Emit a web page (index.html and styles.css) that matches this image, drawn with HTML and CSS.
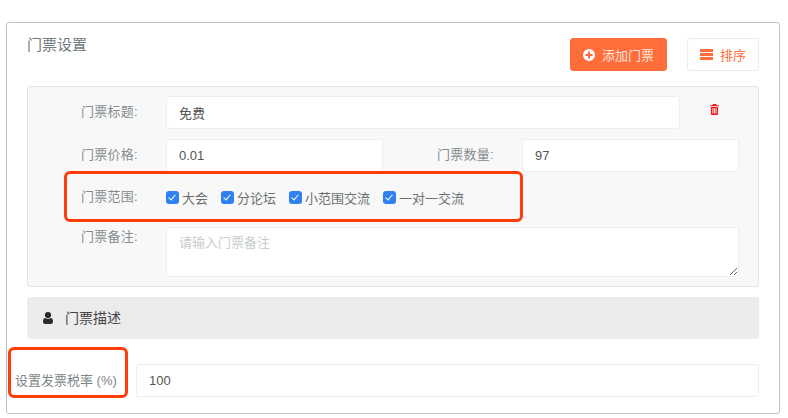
FILE: index.html
```html
<!DOCTYPE html>
<html lang="zh-CN">
<head>
  <meta charset="UTF-8">
  <title>门票设置</title>
  <link rel="stylesheet" href="styles.css">
</head>
<body>
  <div class="card">
    <div class="card-head">
      <div class="card-title">门票设置</div>
      <div class="head-actions">
        <button class="btn btn-add">
          <svg class="icon" width="12" height="12" viewBox="0 0 12 12"><path fill="#fff" d="M6 0a6 6 0 1 0 0 12A6 6 0 0 0 6 0zM9.500 7H7v2.500H5V7H2.500V5H5V2.500h2V5h2.500z"/></svg>
          添加门票
        </button>
        <button class="btn btn-sort">
          <svg class="icon" width="13" height="11" viewBox="0 0 13 11"><path fill="#ff6d3a" d="M0 0h13v3H0zM0 4h13v3H0zM0 8h13v3H0z"/></svg>
          排序
        </button>
      </div>
    </div>

    <div class="ticket-panel">
      <div class="form-row">
        <label class="form-label">门票标题:</label>
        <input class="form-input input-title" type="text" value="免费">
        <span class="delete-link">
          <svg width="9" height="11" viewBox="0 0 10 12"><path fill="#ee1c1c" fill-rule="evenodd" d="M3.300 0h3.400l.7 1.300H10v1.200H0V1.300h2.600zM1 3.200h8V11a1 1 0 0 1-1 1H2a1 1 0 0 1-1-1zM2.700 4.500v6h1v-6zM4.500 4.500v6h1v-6zM6.300 4.500v6h1v-6z"/></svg>
        </span>
      </div>

      <div class="form-row">
        <label class="form-label">门票价格:</label>
        <input class="form-input input-half" type="text" value="0.01">
        <label class="form-label">门票数量:</label>
        <input class="form-input input-half" type="text" value="97">
      </div>

      <div class="form-row scope-row">
        <label class="form-label">门票范围:</label>
        <div class="scope-list">
          <label class="scope-item"><input type="checkbox" checked>大会</label>
          <label class="scope-item"><input type="checkbox" checked>分论坛</label>
          <label class="scope-item"><input type="checkbox" checked>小范围交流</label>
          <label class="scope-item"><input type="checkbox" checked>一对一交流</label>
        </div>
      </div>

      <div class="form-row note-row">
        <label class="form-label">门票备注:</label>
        <textarea class="form-input note-input" placeholder="请输入门票备注"></textarea>
      </div>
    </div>

    <div class="desc-bar">
      <svg class="icon" width="10" height="12" viewBox="0 0 10 12"><path fill="#2b2b2b" d="M5 0a3 3 0 0 1 0 6.200A3 3 0 0 1 5 0zM2.300 6c.7.600 1.600 1 2.700 1s2-.4 2.700-1C9.200 6.100 10 7.500 10 9.500c0 1.500-.8 2.500-2 2.500H2c-1.200 0-2-1-2-2.500C0 7.500.8 6.100 2.300 6z"/></svg>
      <span class="desc-text">门票描述</span>
    </div>

    <div class="tax-row">
      <label class="tax-label">设置发票税率 (%)</label>
      <input class="form-input tax-input" type="text" value="100">
    </div>

    <div class="mark mark-scope"></div>
    <div class="mark mark-tax"></div>
  </div>
</body>
</html>
```

FILE: styles.css
```css
* {
  box-sizing: border-box;
}

html, body {
  height: 100%;
  overflow: hidden;
}

body {
  margin: 0;
  padding: 22px 8px 0 6px;
  background: #fff;
  color: #555;
  font-family: "Liberation Sans", "Noto Sans CJK SC", sans-serif;
  font-size: 13px;
}

.card {
  position: relative;
  height: 392px;
  padding: 15px 20px 0;
  border: 1px solid #b8c6c8;
  border-radius: 3px;
}

.card-head {
  display: flex;
  justify-content: space-between;
  height: 48px;
}

.card-title {
  font-size: 15px;
  line-height: 14px;
  color: #6f7b7d;
}

.head-actions {
  display: flex;
  gap: 20px;
  height: 33px;
}

.btn {
  display: flex;
  align-items: center;
  justify-content: center;
  gap: 7px;
  height: 33px;
  border-radius: 3px;
  font-family: inherit;
  font-size: 13px;
  color: #ff6d3a;
}

.btn-add {
  width: 97px;
  background: #ff6d3a;
  border: 1px solid #ff6d3a;
  color: #ffe6db;
}

.btn-sort {
  width: 72px;
  background: #fff;
  border: 1px solid #e9edef;
}

.icon {
  flex: none;
}

.ticket-panel {
  height: 201px;
  padding: 9px 19px 0 0;
  background: #f8f8f8;
  border: 1px solid #dfe5ea;
  border-radius: 3px;
}

.form-row {
  display: flex;
  align-items: center;
  height: 33px;
  margin-bottom: 10px;
}

.form-label {
  flex: none;
  width: 110px;
  margin: -4px 28px 0 0;
  text-align: right;
  letter-spacing: 0.3px;
  color: #858c8e;
}

.form-input {
  height: 33px;
  padding: 0 12px;
  background: #fff;
  border: 1px solid #eceef0;
  border-radius: 3px;
  font-family: inherit;
  font-size: 13px;
  color: #555;
  outline: none;
}

.input-title {
  width: 514px;
}

.delete-link {
  display: flex;
  margin: -6px 0 0 30px;
}

.input-half {
  flex: none;
  width: 217px;
}

.input-half + .form-label {
  margin-left: 1px;
}

.scope-row {
  margin-top: -1px;
  margin-bottom: 13px;
}

.scope-list {
  display: flex;
  gap: 13px;
}

.scope-item {
  display: flex;
  align-items: center;
  gap: 3px;
  color: #6a7072;
}

.scope-item input {
  position: relative;
  appearance: none;
  width: 13px;
  height: 13px;
  margin: 0;
  background: #2f80f0;
  border-radius: 3px;
}

.scope-item input::after {
  content: "";
  position: absolute;
  left: 4px;
  top: 2px;
  width: 3px;
  height: 6px;
  border: solid #fff;
  border-width: 0 1.5px 1.5px 0;
  transform: rotate(40deg);
}

.note-row {
  align-items: flex-start;
  height: 50px;
}

.note-row .form-label {
  margin-top: -1px;
}

.note-input {
  width: 573px;
  height: 50px;
  padding: 4px 12px;
}

.note-input::placeholder {
  color: #c8cccd;
}

.desc-bar {
  display: flex;
  align-items: center;
  gap: 12px;
  height: 42px;
  margin-top: 10px;
  padding-left: 16px;
  background: #ececec;
  border-radius: 3px;
  font-size: 14px;
  color: #444;
}

.desc-text {
  margin-top: -2px;
}

.tax-row {
  display: flex;
  align-items: center;
  margin: 25px 0 0 -12px;
}

.tax-label {
  flex: none;
  width: 121px;
  margin-top: -2px;
  color: #7d8587;
  white-space: nowrap;
}

.tax-input {
  flex: 1;
}

/* annotation boxes on top of the form */
.mark {
  position: absolute;
  border: 3px solid #ff3b0a;
  border-radius: 6px;
  pointer-events: none;
}

.mark-scope {
  left: 57px;
  top: 148px;
  width: 459px;
  height: 51px;
}

.mark-tax {
  left: 1px;
  top: 324px;
  width: 120px;
  height: 51px;
}
```
